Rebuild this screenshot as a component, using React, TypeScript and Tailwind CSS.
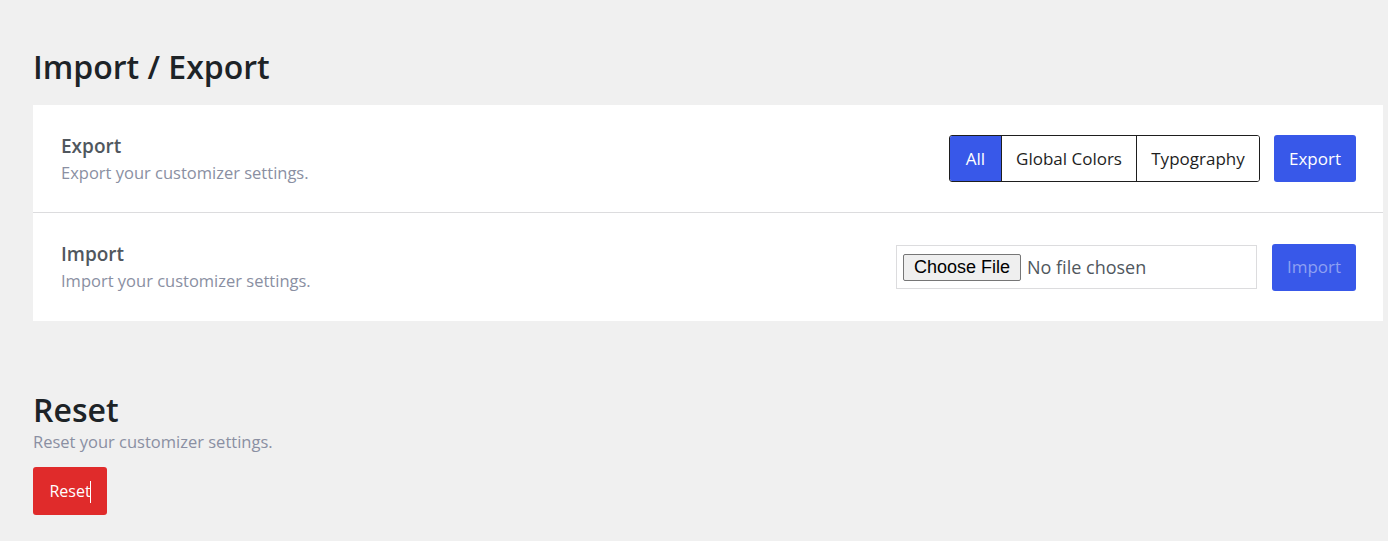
import { useState } from 'react';

const font = { fontFamily: '"Open Sans", "Noto Sans", sans-serif' };

type Scope = 'all' | 'colors' | 'typography';

const scopes: Array<{ id: Scope; label: string; width: string }> = [
  { id: 'all', label: 'All', width: 'w-[51px]' },
  { id: 'colors', label: 'Global Colors', width: 'w-[135px]' },
  { id: 'typography', label: 'Typography', width: 'w-[123px]' },
];

const SettingRow = ({
  title,
  description,
  children,
  divider,
}: {
  title: string;
  description: string;
  children: React.ReactNode;
  divider?: boolean;
}) => (
  <div
    className={`flex items-center justify-between pl-7 pr-[27px] h-[108px] ${
      divider ? 'border-b border-[#dcdcde]' : ''
    }`}
  >
    <div className="pt-[2px]">
      <h3 className="text-[19px] leading-[26px] font-semibold text-[#50575e]">{title}</h3>
      <p className="text-[16.5px] leading-[28px] text-[#8a8fa2]">{description}</p>
    </div>
    <div className="flex items-center">{children}</div>
  </div>
);

export default function App() {
  const [scope, setScope] = useState<Scope>('all');

  return (
    <div className="min-h-screen bg-[#f0f0f0] pl-[33px] pr-[5px] pt-[45px]" style={font}>
      <h1 className="text-[32px] leading-[44px] font-semibold text-[#1d2327] mb-[16px]">
        Import / Export
      </h1>

      <div className="bg-white">
        <SettingRow title="Export" description="Export your customizer settings." divider>
          <div className="flex h-[47px] border border-[#1e1e1e] rounded-[3px] overflow-hidden">
            {scopes.map((s, i) => (
              <button
                key={s.id}
                onClick={() => setScope(s.id)}
                className={`${s.width} h-full text-[17px] ${i > 0 ? 'border-l border-[#1e1e1e]' : ''} ${
                  scope === s.id ? 'bg-[#3858e9] text-white' : 'bg-white text-[#1e1e1e]'
                }`}
              >
                {s.label}
              </button>
            ))}
          </div>
          <button className="ml-[14px] w-[82px] h-[47px] rounded-[3px] bg-[#3858e9] text-white text-[17px]">
            Export
          </button>
        </SettingRow>

        <SettingRow title="Import" description="Import your customizer settings.">
          <label className="flex items-center w-[361px] h-[44px] border border-[#dcdcde] px-[6px] cursor-pointer">
            <span
              className="inline-flex items-center px-[10px] h-[27px] bg-[#efefef] border border-[#767676] rounded-[2px] text-[18px] text-black"
              style={{ fontFamily: '"Liberation Sans", Arial, sans-serif' }}
            >
              Choose File
            </span>
            <span className="ml-[6px] text-[18px] text-[#50575e]">No file chosen</span>
          </label>
          <button
            disabled
            className="ml-[15px] w-[84px] h-[47px] rounded-[3px] bg-[#3858e9] text-[#8ea0f2] text-[17px]"
          >
            Import
          </button>
        </SettingRow>
      </div>

      <div className="mt-[70px]">
        <h2 className="text-[32px] leading-[38px] font-semibold text-[#1d2327]">Reset</h2>
        <p className="text-[16.5px] leading-[26px] text-[#8a8fa2]">Reset your customizer settings.</p>
        <button className="mt-[12px] w-[74px] h-[48px] rounded-[3px] bg-[#e02b2b] text-white text-[16px]">
          Reset<span className="inline-block w-px h-[22px] bg-white align-middle -ml-px" />
        </button>
      </div>
    </div>
  );
}
